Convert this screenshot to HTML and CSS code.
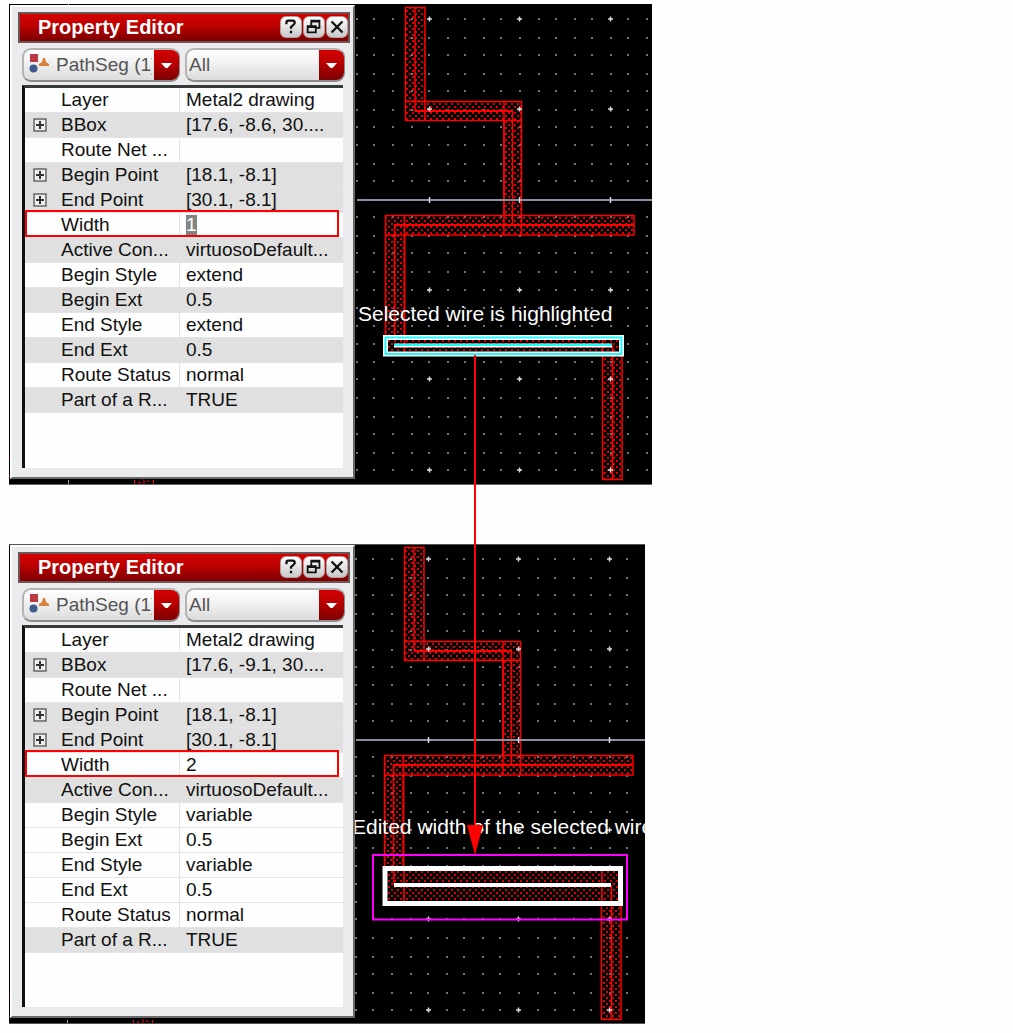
FILE: index.html
```html
<!DOCTYPE html>
<html lang="en">
<head>
<meta charset="utf-8">
<title>Property Editor</title>
<link rel="stylesheet" href="styles.css">
</head>
<body>
<svg class="defs" aria-hidden="true">
  <defs>
    <pattern id="hatch" width="6" height="6" patternUnits="userSpaceOnUse">
      <path d="M1 1h2v2h-2zM4 4h2v2h-2z" fill="#d80000"/>
    </pattern>
    <g id="layout">
      <path d="M356 19h296M356 38h296M356 55h296M356 74h296M356 91h296M356 110h296M356 127h296M356 145h296M356 164h296M356 181h296M356 217h296M356 236h296M356 253h296M356 272h296M356 290h296M356 308h296M356 326h296M356 344h296M356 362h296M356 379h296M356 398h296M356 417h296M356 434h296M356 453h296M356 470h296" stroke="#737382" stroke-width="2" stroke-dasharray="2 15 2 17 2 17 2 15 2 17 2 15 2 17 2 15 2 17 2 17 2 15 2 17 2 15 2 17 2 15 2 17 2 99"/>
      <g fill="url(#hatch)" stroke="#ff0000" stroke-width="1.5">
        <path d="M405.5 7.5h19.500v94H521.500V215.500H634V235H404.500V345H385.500V215.500H504V120.500H405.500z"/>
        <path d="M602.500 345H622V479.500H602.500z"/>
      </g>
      <path d="M405 101.500h20V120M504 120.500h17.500M504 101.500V235M521.500 215v20M504 215.500h17M404.500 215.500V340M385.500 235h20M415 8V111M512.500 111V225M394.500 225V345M612.500 345V479" fill="none" stroke="#ff0000" stroke-width="1.5"/>
      <path d="M415 111H513M394 225H634" stroke="#ff0000" stroke-width="2"/>
      <path d="M357 200H653" stroke="#8c8ca3" stroke-width="2"/>
      <path d="M427 19h5M429.500 16.500v5M517 19h5M519.500 16.500v5M608 19h5M610.500 16.500v5M427 109h5M429.500 106.500v5M517 109h5M519.500 106.500v5M608 109h5M610.500 106.500v5M429.500 197v6M519.500 197v6M610.500 197v6M427 290h5M429.500 287.500v5M517 290h5M519.500 287.500v5M608 290h5M610.500 287.500v5M427 379h5M429.500 376.500v5M517 379h5M519.500 376.500v5M608 379h5M610.500 376.500v5M427 470h5M429.500 467.500v5M517 470h5M519.500 467.500v5M608 470h5M610.500 467.500v5" stroke="#d8d8e0" stroke-width="1.500"/>
      <path d="M68.500 3v2M68.500 480v4" stroke="#9999b0"/>
      <path d="M134.500 480v4M153.500 480v4M138 482h2v2M143 480h1v4M147 481h2v1M9 457h2M9 476h2" stroke="#ff0000" fill="none"/>
    </g>
    <g id="shapes">
      <path d="M1 1h8v8H1z" fill="#b83a44"/>
      <circle cx="4.500" cy="15.500" r="4" fill="#3f5a8c"/>
      <path d="M10 13v-2l3-2 1-4h2l1 4 3 2v2z" fill="#d8813a"/>
    </g>
    <path id="arrow" d="M0 0h11L6.500 5h-2z" fill="#fff"/>
    <g id="help" fill="none" stroke="#111" stroke-width="2.500"><path d="M6 8V6q0-2 2-2h5q2 0 2 2v1q0 1-4 4v2M11 15v3"/></g>
    <g id="restore" fill="none" stroke="#111" stroke-width="2"><path d="M8 9V4h9v8h-4M8 5h9M4 10h9v7H4zM4 11h9"/></g>
    <path id="close" d="M5 5l12 12M17 5L5 17" fill="none" stroke="#111" stroke-width="2.500"/>
    <g id="plus"><path d="M1 1h12v12H1z" fill="#eee" stroke="#666" stroke-width="1.500"/><path d="M3 7h8M7 3v8" stroke="#333" stroke-width="2"/></g>
  </defs>
</svg>

<main class="page">
  <figure class="shot">
    <svg class="canvas" viewBox="9 4 643 481" role="img" aria-label="Layout with the selected wire">
      <path d="M9 4h643v481H9z"/>
      <use href="#layout"/>
      <path d="M386 338H621V354H386z"/>
      <path d="M386 338H621V354H386z" fill="url(#hatch)"/>
      <path d="M404.500 338V354M602.500 338V354M612.500 345V354" stroke="#ff0000" stroke-width="1.5"/>
      <path d="M385.500 337.500H621.500V354H385.500z" fill="none" stroke="#fff" stroke-width="5"/>
      <path d="M385.500 337.500H621.500V354H385.500z" fill="none" stroke="#19ffff" stroke-width="2"/>
      <path d="M394 345.500H612" stroke="#fff" stroke-width="4"/>
      <path d="M394 345H612" stroke="#19ffff" stroke-width="2"/>
      <text class="note" x="358" y="321">Selected wire is highlighted</text>
      <path d="M9 484.500h643" stroke="#666"/>
    </svg>
    <section class="panel">
      <header class="titlebar">
        <h2 class="title">Property Editor</h2>
        <button class="tool" aria-label="Help"><svg viewBox="0 0 22 22"><use href="#help"/></svg></button>
        <button class="tool" aria-label="Restore"><svg viewBox="0 0 22 22"><use href="#restore"/></svg></button>
        <button class="tool" aria-label="Close"><svg viewBox="0 0 22 22"><use href="#close"/></svg></button>
      </header>
      <div class="filters">
        <div class="combo object">
          <svg class="kind" viewBox="0 0 20 20"><use href="#shapes"/></svg>
          <select aria-label="Object"><option>PathSeg (1)</option></select>
          <span class="drop"><svg viewBox="0 0 11 5"><use href="#arrow"/></svg></span>
        </div>
        <div class="combo">
          <select aria-label="Filter"><option>All</option></select>
          <span class="drop"><svg viewBox="0 0 11 5"><use href="#arrow"/></svg></span>
        </div>
      </div>
      <div class="frame">
        <table class="props">
          <tr><th scope="row">Layer</th><td>Metal2 drawing</td></tr>
          <tr class="shade"><th scope="row"><button class="expand" aria-label="Expand BBox"><svg viewBox="0 0 14 14"><use href="#plus"/></svg></button>BBox</th><td>[17.6, -8.6, 30....</td></tr>
          <tr><th scope="row">Route Net ...</th><td></td></tr>
          <tr class="shade"><th scope="row"><button class="expand" aria-label="Expand Begin Point"><svg viewBox="0 0 14 14"><use href="#plus"/></svg></button>Begin Point</th><td>[18.1, -8.1]</td></tr>
          <tr class="shade"><th scope="row"><button class="expand" aria-label="Expand End Point"><svg viewBox="0 0 14 14"><use href="#plus"/></svg></button>End Point</th><td>[30.1, -8.1]</td></tr>
          <tr class="marked"><th scope="row"><label for="width-a">Width</label></th><td><input class="selected" id="width-a" value="1"></td></tr>
          <tr class="shade"><th scope="row">Active Con...</th><td>virtuosoDefault...</td></tr>
          <tr><th scope="row">Begin Style</th><td>extend</td></tr>
          <tr class="shade"><th scope="row">Begin Ext</th><td>0.5</td></tr>
          <tr><th scope="row">End Style</th><td>extend</td></tr>
          <tr class="shade"><th scope="row">End Ext</th><td>0.5</td></tr>
          <tr><th scope="row">Route Status</th><td>normal</td></tr>
          <tr class="shade"><th scope="row">Part of a R...</th><td>TRUE</td></tr>
        </table>
      </div>
    </section>
  </figure>

  <figure class="shot narrow">
    <svg class="canvas" viewBox="9 4 636 480" role="img" aria-label="Layout with the edited wire">
      <path d="M9 4h636v480H9z"/>
      <use href="#layout" x="-1"/>
      <path d="M385 329H620V363H385z"/>
      <path d="M385 329H620V363H385z" fill="url(#hatch)"/>
      <path d="M404 329V363M602 329V363M611.500 345V363M394 329V345" stroke="#ff0000" stroke-width="1.5"/>
      <path d="M385 328.500H620.500V363.500H385z" fill="none" stroke="#fff" stroke-width="5"/>
      <path d="M394 345H611" stroke="#fff" stroke-width="4"/>
      <path d="M373 315H627V379.500H373z" fill="none" stroke="#ff00ff" stroke-width="2"/>
      <text class="note" x="352" y="294">Edited width of the selected wire</text>
      <path d="M9 4.500h636M9 483.500h636" stroke="#555"/>
    </svg>
    <section class="panel">
      <header class="titlebar">
        <h2 class="title">Property Editor</h2>
        <button class="tool" aria-label="Help"><svg viewBox="0 0 22 22"><use href="#help"/></svg></button>
        <button class="tool" aria-label="Restore"><svg viewBox="0 0 22 22"><use href="#restore"/></svg></button>
        <button class="tool" aria-label="Close"><svg viewBox="0 0 22 22"><use href="#close"/></svg></button>
      </header>
      <div class="filters">
        <div class="combo object">
          <svg class="kind" viewBox="0 0 20 20"><use href="#shapes"/></svg>
          <select aria-label="Object"><option>PathSeg (1)</option></select>
          <span class="drop"><svg viewBox="0 0 11 5"><use href="#arrow"/></svg></span>
        </div>
        <div class="combo">
          <select aria-label="Filter"><option>All</option></select>
          <span class="drop"><svg viewBox="0 0 11 5"><use href="#arrow"/></svg></span>
        </div>
      </div>
      <div class="frame">
        <table class="props">
          <tr><th scope="row">Layer</th><td>Metal2 drawing</td></tr>
          <tr class="shade"><th scope="row"><button class="expand" aria-label="Expand BBox"><svg viewBox="0 0 14 14"><use href="#plus"/></svg></button>BBox</th><td>[17.6, -9.1, 30....</td></tr>
          <tr><th scope="row">Route Net ...</th><td></td></tr>
          <tr class="shade"><th scope="row"><button class="expand" aria-label="Expand Begin Point"><svg viewBox="0 0 14 14"><use href="#plus"/></svg></button>Begin Point</th><td>[18.1, -8.1]</td></tr>
          <tr class="shade"><th scope="row"><button class="expand" aria-label="Expand End Point"><svg viewBox="0 0 14 14"><use href="#plus"/></svg></button>End Point</th><td>[30.1, -8.1]</td></tr>
          <tr class="marked"><th scope="row"><label for="width-b">Width</label></th><td><input id="width-b" value="2"></td></tr>
          <tr class="shade"><th scope="row">Active Con...</th><td>virtuosoDefault...</td></tr>
          <tr><th scope="row">Begin Style</th><td>variable</td></tr>
          <tr><th scope="row">Begin Ext</th><td>0.5</td></tr>
          <tr><th scope="row">End Style</th><td>variable</td></tr>
          <tr><th scope="row">End Ext</th><td>0.5</td></tr>
          <tr><th scope="row">Route Status</th><td>normal</td></tr>
          <tr class="shade"><th scope="row">Part of a R...</th><td>TRUE</td></tr>
        </table>
      </div>
    </section>
  </figure>

  <svg class="pointer" viewBox="0 0 18 500" aria-hidden="true">
    <path d="M9 0V475" stroke="#ff0000" stroke-width="2"/>
    <path d="M1 470h16L9 500z" fill="#ff0000"/>
  </svg>
</main>
</body>
</html>
```
FILE: styles.css
```css
*,
*::after {
  box-sizing: border-box;
}

body {
  margin: 0;
  background: #fefefe;
  color: #111;
  font-family: "Liberation Sans", Arial, sans-serif;
  font-size: 19px;
}

.defs {
  position: absolute;
  width: 0;
  height: 0;
}

.page {
  position: relative;
  display: flex;
  flex-direction: column;
  gap: 59px;
  padding: 4px 9px 9px;
}

.shot {
  display: grid;
  grid-template-columns: minmax(0, 1fr);
  width: 100%;
  max-width: 643px;
  margin: 0;
}

.narrow {
  max-width: 636px;
}

.canvas {
  grid-area: 1 / 1;
  display: block;
  width: 100%;
}

.note {
  fill: #fff;
  font-size: 21px;
}

.pointer {
  position: absolute;
  left: 466px;
  top: 355px;
  width: 18px;
  height: 500px;
}

.panel {
  grid-area: 1 / 1;
  display: flex;
  flex-direction: column;
  width: 345px;
  margin: 1px 0 6px 1px;
  padding: 5px 3px 9px 6px;
  border: 2px solid;
  border-color: #fff #6a6a6a #6a6a6a #fff;
  background: #ebebed;
}

.titlebar {
  display: flex;
  align-items: center;
  gap: 1px;
  height: 31px;
  padding: 0 0 2px 18px;
  border: 2px solid #6b5555;
  background: linear-gradient(#d40000, #c00000 40%, #7c0000);
}

.title {
  flex: 1;
  margin: 0;
  color: #fff;
  font-size: 20px;
  line-height: 24px;
}

.tool {
  width: 22px;
  height: 22px;
  padding: 0;
  border: 1px solid #b0a0a0;
  border-radius: 6px;
  background: linear-gradient(#fff, #c8c8c8);
}

.tool svg,
.expand svg,
.kind {
  display: block;
}

.filters {
  display: grid;
  grid-template-columns: 158px 1fr;
  gap: 5px;
  padding: 5px 5px 3px 4px;
}

.combo {
  position: relative;
  height: 34px;
}

.combo select {
  width: 100%;
  height: 34px;
  padding: 0 26px 2px 2px;
  border: 2px solid;
  border-color: #b4b4b4 #8c8c8c #8c8c8c #b4b4b4;
  border-radius: 9px;
  appearance: none;
  background: linear-gradient(#fff, #f2f2f2 40%, #dcdcdc);
  color: #555;
  font: inherit;
}

.object select {
  padding-left: 32px;
}

.kind {
  position: absolute;
  left: 7px;
  top: 5px;
  width: 20px;
  height: 20px;
}

.drop {
  position: absolute;
  right: 1px;
  top: 2px;
  display: grid;
  place-items: center;
  width: 25px;
  height: 30px;
  border-radius: 0 8px 8px 0;
  background: linear-gradient(#d40000, #b80000 45%, #7c0000);
  pointer-events: none;
}

.drop svg {
  width: 11px;
  height: 5px;
}

.frame {
  flex: 1;
  margin: 0 7px 0 4px;
  border: solid #111;
  border-width: 3px 0 0 3px;
  border-top-color: #353b38;
  background: #fefefe;
}

.props {
  width: 100%;
  table-layout: fixed;
  border-collapse: separate;
  border-spacing: 0;
}

.props th,
.props td {
  height: 25px;
  padding: 0;
  border-bottom: 1px solid #e4e4e4;
  line-height: 24px;
  font-weight: normal;
  text-align: left;
  white-space: nowrap;
}

.props th {
  position: relative;
  width: 155px;
  padding-left: 36px;
  border-right: 1px solid #e4e4e4;
}

.props td {
  padding-left: 6px;
}

.props .shade {
  background: #e0e0e0;
}

.props .marked th {
  z-index: 1;
}

.props .marked th::after {
  content: "";
  position: absolute;
  left: 0;
  top: -3px;
  width: 314px;
  height: 27px;
  border: 2px solid #ff0000;
  pointer-events: none;
}

.expand {
  position: absolute;
  left: 8px;
  top: 5px;
  width: 14px;
  height: 14px;
  padding: 0;
  border: 0;
  background: none;
}

.props input {
  display: block;
  width: 100px;
  height: 21px;
  padding: 0;
  border: 0;
  background: none;
  color: #111;
  font: inherit;
}

.props .selected {
  width: 11px;
  background: #808582;
  color: #fff;
}
```
